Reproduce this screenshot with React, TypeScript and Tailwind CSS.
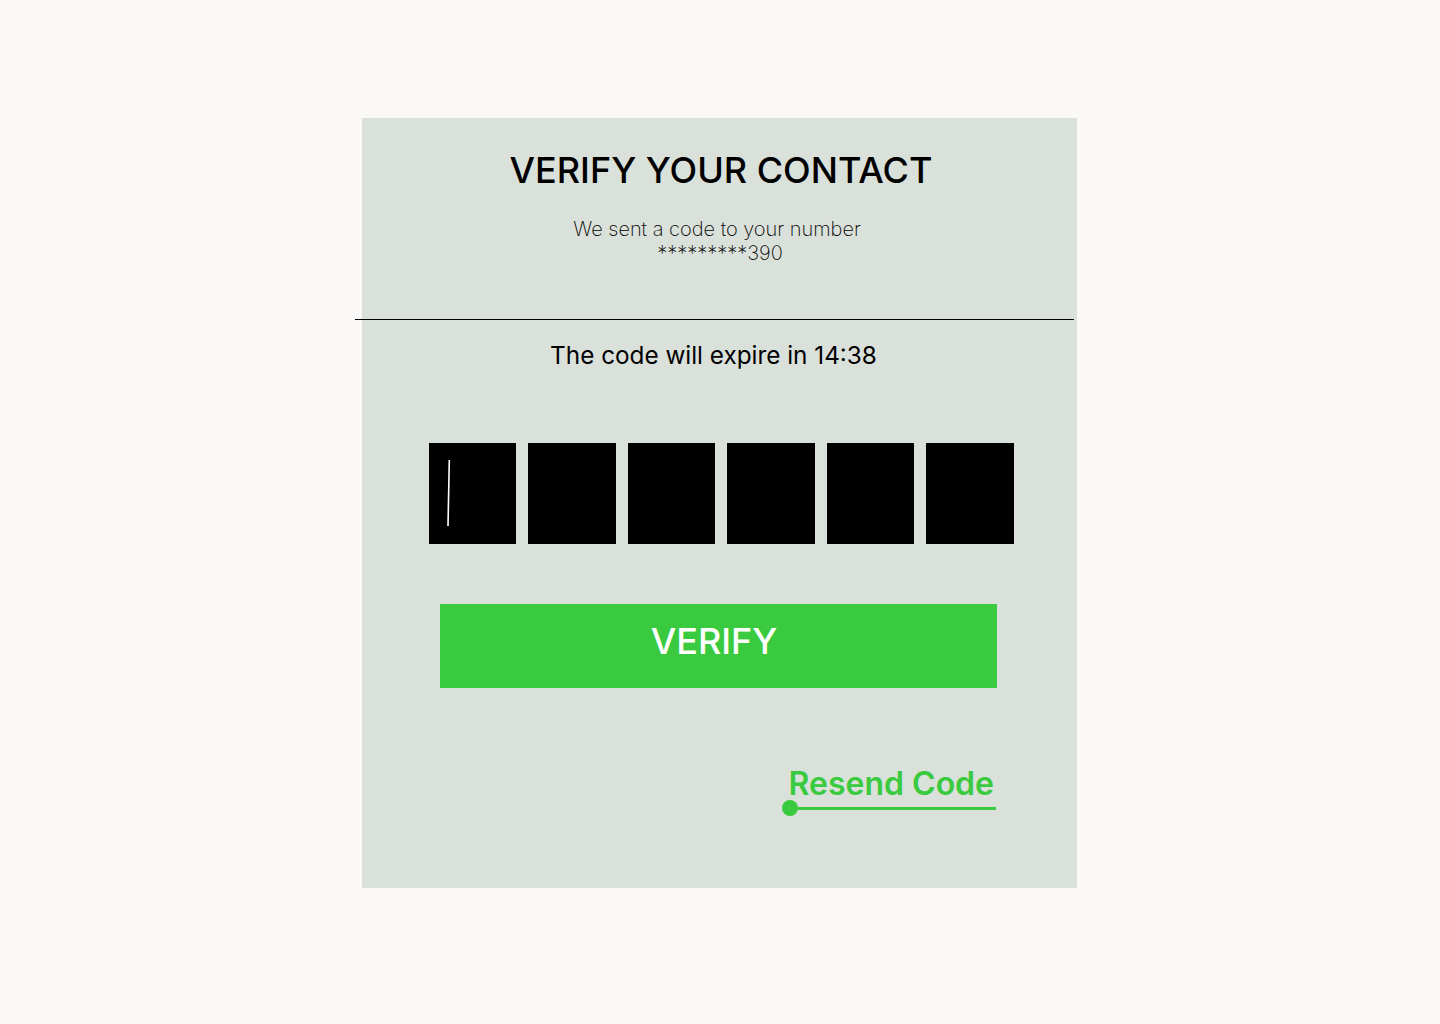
import React, { useState } from 'react';

const CODE_LENGTH = 6;

const CodeBox = ({ active }: { active: boolean }) => (
  <div className="relative w-[87.3px] h-[101px] bg-black shrink-0">
    {active && (
      <svg className="absolute left-0 top-0" width="87" height="101" viewBox="0 0 87 101">
        <line x1="20.3" y1="17" x2="19" y2="83" stroke="#ffffff" strokeWidth="1.6" />
      </svg>
    )}
  </div>
);

export default function App() {
  const [code] = useState<string[]>(Array(CODE_LENGTH).fill(''));

  return (
    <div
      className="min-h-[1024px] w-full bg-[#faf9f7] pt-[118px] pl-[362px]"
      style={{ fontFamily: 'Inter, "Noto Sans", sans-serif' }}
    >
      <div className="w-[715px] h-[770px] bg-[#dae0da] flex flex-col">
        <h1 className="mt-[34px] pl-[3px] text-center text-[36px] leading-[36px] font-medium text-black">
          VERIFY YOUR CONTACT
        </h1>
        <p className="mt-[29px] text-center text-[20px] leading-[24px] font-extralight text-black">
          <span className="block pr-[5px]">We sent a code to your number</span>
          <span className="block pl-[1px]">*********390</span>
        </p>

        <div className="mt-[54px] ml-[-7px] w-[719px] h-px bg-black" />

        <p className="mt-[19px] pr-[12px] text-center text-[24.3px] leading-[32px] font-normal text-black">
          The code will expire in 14:38
        </p>

        <div className="mt-[72px] ml-[67px] flex gap-[12.2px]">
          {code.map((_, i) => (
            <CodeBox key={i} active={i === 0} />
          ))}
        </div>

        <button className="mt-[60px] ml-[78px] w-[557px] h-[84px] bg-[#3aca40] flex items-center justify-center pr-[9px] pb-[10px] text-white text-[36px] leading-none font-medium">
          VERIFY
        </button>

        <div className="mt-[76px] ml-[420px] w-[214px] flex flex-col items-end">
          <span className="pr-[2px] text-[32px] leading-[40px] font-semibold text-[#3aca40]">
            Resend Code
          </span>
          <div className="relative mt-[-4px] w-full h-[16px] flex items-center">
            <div className="absolute left-0 top-0 w-[16px] h-[16px] rounded-full bg-[#3aca40]" />
            <div className="ml-[8px] flex-1 h-[3px] bg-[#3aca40]" />
          </div>
        </div>
      </div>
    </div>
  );
}
